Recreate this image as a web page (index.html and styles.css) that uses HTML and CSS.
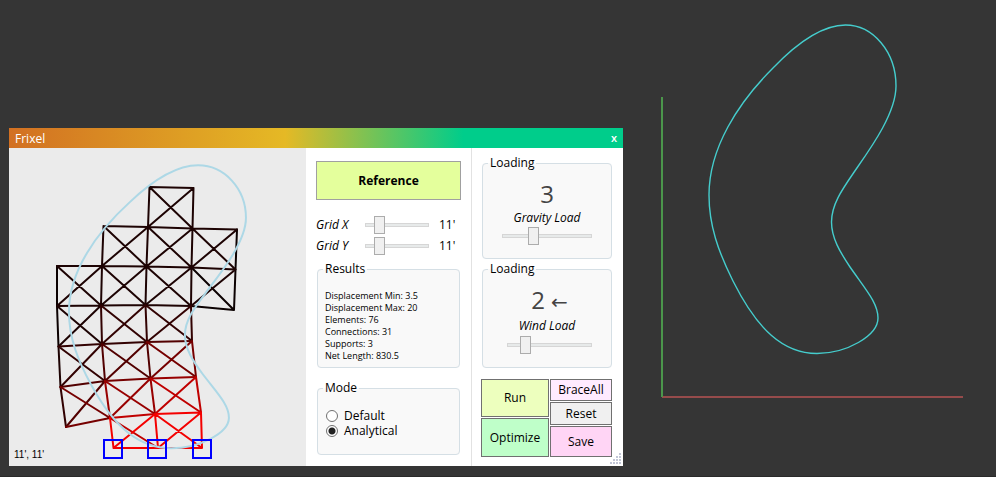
FILE: index.html
```html
<!DOCTYPE html>
<html lang="en">
<head>
<meta charset="utf-8">
<title>Frixel</title>
<link rel="stylesheet" href="styles.css">
</head>
<body>
<main class="workspace">
  <section class="window" aria-label="Frixel">
    <header class="titlebar">
      <h1 class="title">Frixel</h1>
      <button class="close" type="button" aria-label="Close">x</button>
    </header>
    <div class="panes">
      <div class="preview">
        <svg class="drawing" viewBox="9 148 297 318" aria-hidden="true">
          <g class="truss">
            <path stroke="#0c0202" d="M237 229.500L235.500 269.500L234 310L191 306M191.500 267.500L234 310M57 266V306L58.500 346.500"/>
            <path stroke="#1d0303" d="M149.500 187L193.500 188L192.500 228.500L148 227ZM149.500 187L192.500 228.500M193.500 188L148 227
              M103.500 226L148 227M192.500 228.500L237 229.500M103.500 226L102 266M148 227L146.500 266.500M192.500 228.500L191.500 267.500
              M103.500 226L146.500 266.500M148 227L102 266M148 227L191.500 267.500M192.500 228.500L146.500 266.500M192.500 228.500L235.500 269.500M237 229.500L191.500 267.500
              M57 266H102L146.500 266.500L191.500 267.500L235.500 269.500M102 266L101 305.500M146.500 266.500L145.500 305M191.500 267.500L191 306
              M57 266L101 305.500M102 266L57 306M102 266L145.500 305M146.500 266.500L101 305.500M146.500 266.500L191 306M191.500 267.500L145.500 305M235.500 269.500L191 306
              M57 306L101 305.500L145.500 305L191 306M57 306L102 344M101 305.500L58.500 346.500M58.500 346.500L60.500 387"/>
            <path stroke="#320202" d="M101 305.500L102 344M145.500 305L147 342M191 306L192 341M101 305.500L147 342M145.500 305L102 344M145.500 305L192 341M191 306L147 342
              M58.500 346.500L102 344L147 342M58.500 346.500L105 381M102 344L60.500 387M60.500 387L66 427"/>
            <path stroke="#520000" d="M147 342L192 341M102 344L105 381M147 342L150.500 378.500M102 344L150.500 378.500M147 342L105 381M60.500 387L105 381M105 381L66 427"/>
            <path stroke="#760000" d="M192 341L196 377M147 342L196 377M192 341L150.500 378.500M105 381L150.500 378.500M60.500 387L110 418M66 427L110 418"/>
            <path stroke="#980000" d="M150.500 378.500L196 377M105 381L110 418M105 381L155 414M150.500 378.500L110 418M150.500 378.500L155 414"/>
            <path stroke="#c00000" d="M196 377L201 412.500M150.500 378.500L201 412.500M196 377L155 414M110 418L155 414M110 418L158 448"/>
            <path stroke="#f40000" d="M155 414L201 412.500M110 418L113.500 448H202L201 412.500M155 414L158 448M155 414L113.500 448M155 414L202 448M201 412.500L158 448"/>
          </g>
          <use class="shape" href="#outline" transform="matrix(.9465 0 0 .8613 -602.1 143.800)"/>
          <g class="supports">
            <rect x="104" y="440" width="18" height="18"/>
            <rect x="148" y="440" width="18" height="18"/>
            <rect x="193" y="440" width="18" height="18"/>
          </g>
        </svg>
        <output class="cell-size">11', 11'</output>
      </div>

      <form class="pane setup">
        <button class="reference" type="button">Reference</button>
        <div class="grid-controls">
          <label for="grid-x">Grid X</label>
          <input id="grid-x" type="range" min="5" max="45" value="11">
          <output for="grid-x">11'</output>
          <label for="grid-y">Grid Y</label>
          <input id="grid-y" type="range" min="5" max="45" value="11">
          <output for="grid-y">11'</output>
        </div>
        <fieldset class="group results">
          <legend>Results</legend>
          <ul class="result-list">
            <li>Displacement Min: 3.5</li>
            <li>Displacement Max: 20</li>
            <li>Elements: 76</li>
            <li>Connections: 31</li>
            <li>Supports: 3</li>
            <li>Net Length: 830.5</li>
          </ul>
        </fieldset>
        <fieldset class="group mode">
          <legend>Mode</legend>
          <label class="option"><input type="radio" name="mode">Default</label>
          <label class="option"><input type="radio" name="mode" checked>Analytical</label>
        </fieldset>
      </form>

      <form class="pane analysis">
        <fieldset class="group loading">
          <legend>Loading</legend>
          <output class="load" for="gravity">3</output>
          <label for="gravity">Gravity Load</label>
          <input id="gravity" type="range" min="0" max="100" value="32">
        </fieldset>
        <fieldset class="group loading wind">
          <legend>Loading</legend>
          <output class="load" for="wind">2 <span class="arrow">←</span></output>
          <label for="wind">Wind Load</label>
          <input id="wind" type="range" min="0" max="100" value="17">
        </fieldset>
        <div class="actions">
          <div class="action-column main-actions">
            <button class="run" type="button">Run</button>
            <button class="optimize" type="button">Optimize</button>
          </div>
          <div class="action-column side-actions">
            <button class="brace" type="button">BraceAll</button>
            <button class="reset" type="button">Reset</button>
            <button class="save" type="button">Save</button>
          </div>
        </div>
      </form>
    </div>
    <svg class="grip" viewBox="0 0 12 12" aria-hidden="true">
      <path d="M9 0h2v2h-2zM6 3h2v2h-2zM9 3h2v2h-2zM3 6h2v2h-2zM6 6h2v2h-2zM9 6h2v2h-2zM0 9h2v2h-2zM3 9h2v2h-2zM6 9h2v2h-2zM9 9h2v2h-2z"/>
    </svg>
  </section>

  <svg class="scene" viewBox="623 0 373 476" role="img" aria-label="Model outline">
    <path class="axis-x" d="M662 397H963"/>
    <path class="axis-y" d="M662 97V397"/>
    <path id="outline" class="curve" vector-effect="non-scaling-stroke" d="M845.500 25C873 25 896 52 896 86C896 112 873 145 857.600 167C844 187 831.500 203 831.500 222C831.500 238 840 252 850 267C866 290 878 303 878 318C878 336 846 353.500 817 353.500C783 353.500 757 329 733 281C718 251 709 225 709 195C709 148 738 103 773 68C797 43 822 25 845.500 25Z"/>
  </svg>
</main>
</body>
</html>
```
FILE: styles.css
```css
* {
  box-sizing: border-box;
}

body {
  margin: 0;
  background: #353535;
  color: #000;
  font: 12px/16px "Open Sans", "Noto Sans", sans-serif;
}

button,
input {
  margin: 0;
  font: inherit;
  color: inherit;
}

.workspace {
  display: grid;
  grid-template-columns: 614fr 373fr;
  align-items: end;
  min-height: 100vh;
  padding-left: 9px;
  border-bottom: 1px solid #2a2a2a;
}

.window {
  position: relative;
  margin-bottom: 10px;
  background: #fff;
}

.titlebar {
  display: flex;
  align-items: center;
  justify-content: space-between;
  height: 20px;
  padding: 0 6px;
  background: linear-gradient(90deg, #d27022, #e5b925 45%, #00cd8b 74%);
  color: #fff;
}

.title {
  margin: 0;
  padding-top: 2px;
  font-size: 12px;
  font-weight: 400;
}

.close {
  padding: 0;
  border: 0;
  background: none;
  font-size: 11px;
  font-weight: 600;
}

.panes {
  display: grid;
  grid-template-columns: 297fr 165fr 152fr;
}

.preview {
  position: relative;
  background: #ebebeb;
}

.drawing {
  display: block;
  width: 100%;
  height: 100%;
}

.truss,
.supports {
  fill: none;
  stroke-width: 2;
}

.truss {
  stroke-linejoin: round;
  stroke-linecap: round;
}

.supports {
  stroke: #00f;
}

.curve {
  fill: none;
  stroke-width: inherit;
}

.shape {
  stroke: #add8e6;
  stroke-width: 2;
}

.cell-size {
  position: absolute;
  left: 5px;
  bottom: 3px;
  font: 10px/16px "Liberation Sans", sans-serif;
}

.pane {
  display: flex;
  flex-direction: column;
}

.setup {
  padding: 13px 10px 11px;
}

.reference {
  height: 39px;
  border: 1px solid #a0a0a0;
  background: #e4ff9c;
  font-weight: 700;
}

.grid-controls {
  display: grid;
  grid-template-columns: 49px 1fr 22px;
  grid-auto-rows: 21px;
  align-items: center;
  margin-top: 14px;
}

.grid-controls label,
.loading label {
  font-style: italic;
}

.grid-controls output {
  text-align: right;
  padding-right: 6px;
  white-space: nowrap;
}

.group {
  min-width: 0;
  margin: 0;
  padding: 0 7px;
  border: 1px solid #d5dfe5;
  border-radius: 4px;
  background: #f9f9f9;
}

.group legend {
  margin-left: -2px;
  padding: 0 2px;
}

.results {
  margin: 5px 1px 0;
}

.result-list {
  margin: 0;
  padding: 13px 0 5px;
  list-style: none;
  font-size: 9px;
  line-height: 12px;
  white-space: nowrap;
}

.mode {
  margin: 12px 1px 0;
  padding-top: 12px;
  padding-bottom: 16px;
}

.option {
  display: flex;
  align-items: center;
  gap: 6px;
  padding-left: 1px;
  line-height: 15px;
}

input[type="radio"] {
  appearance: none;
  width: 12px;
  height: 12px;
  border: 1px solid #707070;
  border-radius: 50%;
  background: #fff;
}

input[type="radio"]:checked {
  background: radial-gradient(circle, #212121 3px, #fff 4px);
}

input[type="range"] {
  appearance: none;
  display: block;
  width: 100%;
  min-width: 0;
  height: 18px;
  background: none;
}

input[type="range"]::-webkit-slider-runnable-track {
  height: 4px;
  border: 1px solid #d6d6d6;
  background: #e7eaea;
}

input[type="range"]::-webkit-slider-thumb {
  appearance: none;
  width: 11px;
  height: 18px;
  margin-top: -8px;
  border: 1px solid #acacac;
  background: #f0f0f0;
}

.grid-controls input {
  width: calc(100% - 10px);
}

.analysis {
  padding: 7px 11px 9px 10px;
  border-left: 1px solid #e2e2e2;
}

.loading {
  padding: 11px 19px 13px;
}

.loading legend {
  margin-left: -14px;
}

.loading label {
  display: block;
  margin: 4px 0 1px;
  text-align: center;
}

.load {
  display: block;
  color: #444;
  font-size: 24px;
  line-height: 24px;
  text-align: center;
}

.arrow {
  font-family: "DejaVu Sans", sans-serif;
  font-size: 20px;
}

.wind {
  margin-top: 2px;
  padding-left: 24px;
}

.wind legend {
  margin-left: -19px;
}

.wind label {
  margin-right: 5px;
  margin-bottom: 2px;
}

.actions {
  display: grid;
  grid-template-columns: 68fr 62fr;
  gap: 1px;
  margin: 11px 0 0 -1px;
}

.action-column {
  display: grid;
  gap: 1px;
}

.main-actions {
  grid-template-rows: 38px 39px;
}

.side-actions {
  grid-template-rows: 22px 23px 31px;
}

.actions button {
  padding: 0;
  border: 1px solid #707070;
}

.actions .run {
  background: #edffbe;
}

.actions .optimize {
  background: #bfffc9;
}

.actions .brace {
  background: #ffebff;
}

.actions .reset {
  background: #f0f0f0;
}

.actions .save {
  background: #ffd5f5;
}

.grip {
  position: absolute;
  right: 1px;
  bottom: 1px;
  width: 12px;
  height: 12px;
  fill: #c2c6d6;
}

.scene {
  display: block;
  width: 100%;
  stroke: #45cdcd;
  stroke-width: 1.4;
}

.axis-x,
.axis-y {
  fill: none;
  stroke-width: 2;
}

.axis-x {
  stroke: #964b4b;
}

.axis-y {
  stroke: #4b964b;
}
```
